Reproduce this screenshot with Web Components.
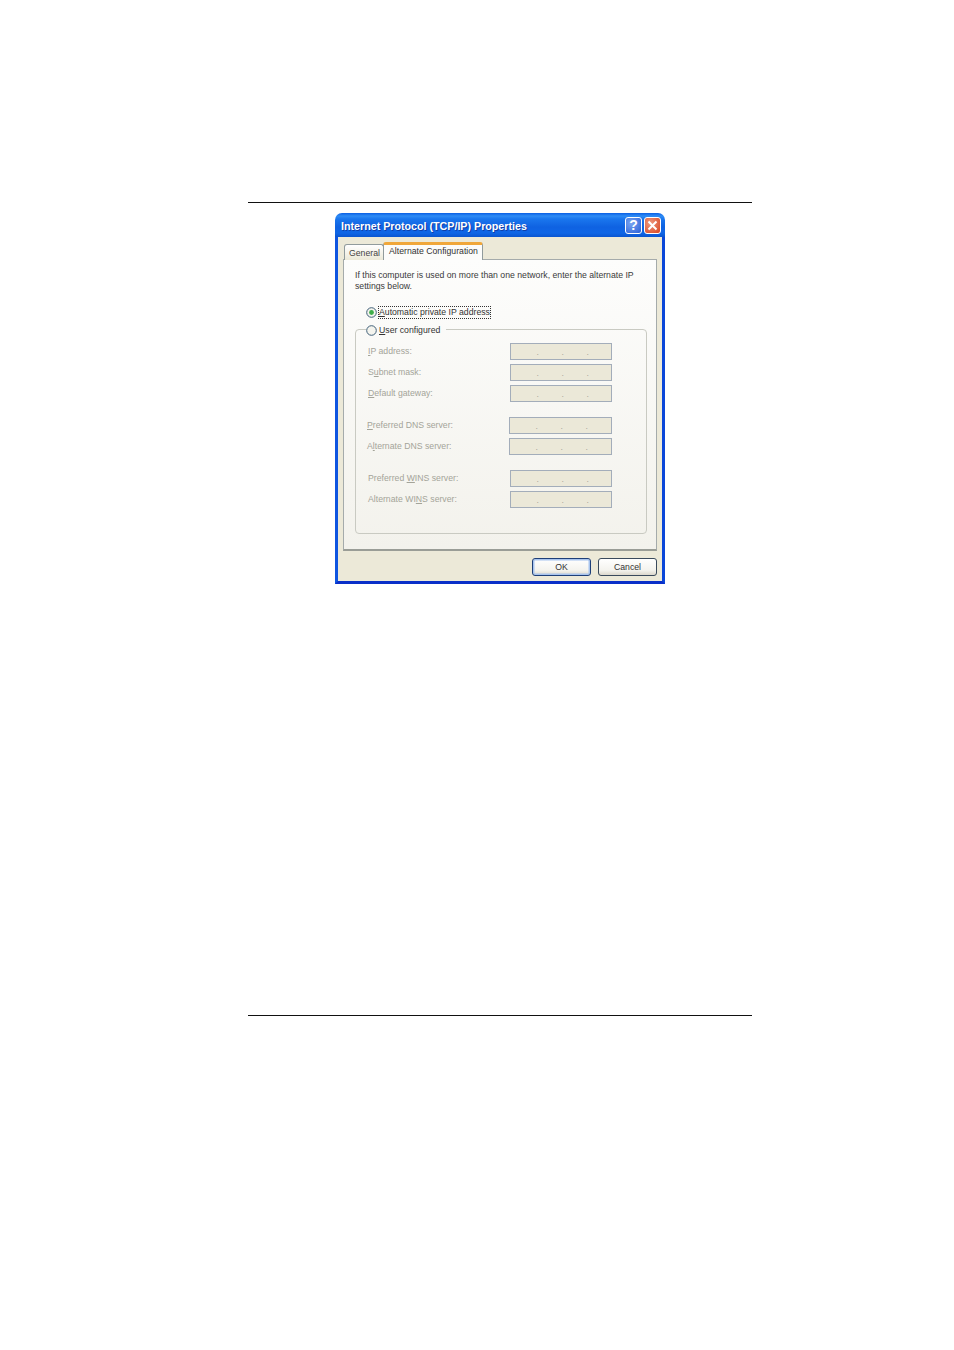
<!DOCTYPE html>
<html>
<head>
<meta charset="utf-8">
<title>Internet Protocol (TCP/IP) Properties</title>
<style>
html,body{margin:0;padding:0;background:#fff;}
body{font-family:"Liberation Sans",Arial,sans-serif;}
</style>
</head>
<body>
<manual-page>
  <xp-window title="Internet Protocol (TCP/IP) Properties">
    <xp-tabs></xp-tabs>
  </xp-window>
</manual-page>

<script>
class ManualPage extends HTMLElement {
    constructor(){
        super();
        this.attachShadow({mode:'open'});
        this.shadowRoot.innerHTML = `
        <style>
            :host{display:block;width:954px;height:1350px;padding-top:202px;box-sizing:border-box;}
            .sheet{width:504px;height:814px;margin-left:248px;box-sizing:border-box;
                   border-top:1px solid #111;border-bottom:1px solid #111;padding-top:10px;}
            .center{margin-left:87px;}
        </style>
        <div class="sheet"><div class="center"><slot></slot></div></div>`;
    }
}

class XpWindow extends HTMLElement {
    constructor(){
        super();
        this.attachShadow({mode:'open'});
        this.shadowRoot.innerHTML = `
        <style>
            :host{display:flex;flex-direction:column;width:330px;height:371px;box-sizing:border-box;
                  border-radius:7px 7px 0 0;overflow:hidden;font-family:"Liberation Sans",Arial,sans-serif;}
            .bar{height:24px;flex:none;display:flex;align-items:center;padding:0 4px 0 6px;gap:2px;
                 background:linear-gradient(#0a5fe4 0,#2f8cf5 3px,#1a76ee 6px,#0f62e2 14px,#0f66e6 20px,#0a55d0 24px);}
            .name{flex:1;color:#fff;font-size:10.7px;font-weight:bold;white-space:nowrap;position:relative;top:1px;
                  text-shadow:1px 1px 0 #0f3fa8;}
            .btn{width:17px;height:17px;box-sizing:border-box;border:1px solid #fff;border-radius:3px;
                 display:flex;align-items:center;justify-content:center;}
            .help{background:radial-gradient(circle at 35% 35%,#7aa5f0,#2a5fd8);color:#fff;font-size:14px;font-weight:bold;}
            .close{background:radial-gradient(circle at 35% 35%,#ee9a80,#d8431f);}
            .frame{flex:1;display:flex;flex-direction:column;box-sizing:border-box;background:#ece9d8;
                   border-left:3px solid #0f55e0;border-right:3px solid #0a46d8;border-bottom:3px solid #0a2fc8;
                   padding:5px 5px 0;}
            .foot{display:flex;justify-content:flex-end;gap:7px;margin-top:7px;}
        </style>
        <div class="bar">
            <span class="name"></span>
            <span class="btn help">?</span>
            <span class="btn close">
                <svg width="11" height="11" viewBox="0 0 11 11"><path d="M1.5 1.5L9.5 9.5M9.5 1.5L1.5 9.5" stroke="#fff" stroke-width="2" fill="none"/></svg>
            </span>
        </div>
        <div class="frame">
            <slot></slot>
            <div class="foot">
                <xp-button default>OK</xp-button>
                <xp-button>Cancel</xp-button>
            </div>
        </div>`;
        this.shadowRoot.querySelector('.name').innerText = this.getAttribute('title');
    }
}

class XpTabs extends HTMLElement {
    constructor(){
        super();
        this.attachShadow({mode:'open'});
        this.shadowRoot.innerHTML = `
        <style>
            :host{display:block;font-size:8.7px;color:#3a3a3a;}
            .strip{display:flex;align-items:flex-end;height:18px;padding-left:1px;position:relative;z-index:1;}
            .tab{box-sizing:border-box;background:linear-gradient(#fff,#ece9d8);border:1px solid #919b9c;border-bottom:none;
                 border-radius:3px 3px 0 0;height:16px;width:40px;padding-left:1px;text-align:center;line-height:16px;color:#444;}
            .on{width:100px;height:18px;background:#fcfcfa;border-top:3px solid #f0a73a;line-height:13px;color:#333;margin-left:-1px;}
            .panel{box-sizing:border-box;height:292px;margin-top:-1px;border:1px solid #a5abab;border-bottom:2px solid #9a9d96;
                   background:linear-gradient(#fdfdfc,#f3f2ec);padding:10px 10px 0 11px;}
            .intro{margin:0;line-height:11px;width:284px;}
            .auto{margin:14px 0 0 11px;}
            fieldset{margin:5px 0 0;padding:8px 0 0;height:210px;box-sizing:border-box;border:1px solid #c9cac2;border-radius:4px;width:292px;}
            legend{margin-left:10px;padding:0 6px 0 0;line-height:11px;height:11px;}
            .gap{height:11px;}
        </style>
        <div class="strip">
            <div class="tab">General</div>
            <div class="tab on">Alternate Configuration</div>
        </div>
        <div class="panel">
            <p class="intro">If this computer is used on more than one network, enter the alternate IP settings below.</p>
            <xp-radio class="auto" checked focus><u>A</u>utomatic private IP address</xp-radio>
            <fieldset>
                <legend><xp-radio><u>U</u>ser configured</xp-radio></legend>
                <xp-field><u>I</u>P address:</xp-field>
                <xp-field>S<u>u</u>bnet mask:</xp-field>
                <xp-field><u>D</u>efault gateway:</xp-field>
                <div class="gap"></div>
                <xp-field shift><u>P</u>referred DNS server:</xp-field>
                <xp-field shift>A<u>l</u>ternate DNS server:</xp-field>
                <div class="gap"></div>
                <xp-field>Preferred <u>W</u>INS server:</xp-field>
                <xp-field>Alternate WI<u>N</u>S server:</xp-field>
            </fieldset>
        </div>`;
    }
}

class XpRadio extends HTMLElement {
    constructor(){
        super();
        this.attachShadow({mode:'open'});
        const dot = this.hasAttribute('checked') ? '<circle cx="5.5" cy="5.5" r="2.4" fill="#3fae4a"/>' : '';
        const outline = this.hasAttribute('focus') ? 'outline:1px dotted #333;' : '';
        this.shadowRoot.innerHTML = `
        <style>
            :host{display:block;color:#333;}
            .row{display:flex;align-items:center;gap:2px;height:13px;}
            svg{flex:none;}
            .txt{line-height:11px;white-space:nowrap;${outline}}
        </style>
        <div class="row">
            <svg width="11" height="11" viewBox="0 0 11 11"><circle cx="5.5" cy="5.5" r="4.8" fill="#f4f4ee" stroke="#3f5f78"/>${dot}</svg>
            <span class="txt"><slot></slot></span>
        </div>`;
    }
}

class XpField extends HTMLElement {
    constructor(){
        super();
        this.attachShadow({mode:'open'});
        this.shadowRoot.innerHTML = `
        <style>
            :host{display:block;height:17px;margin-bottom:4px;color:#a4a499;}
            .row{display:flex;align-items:center;height:17px;padding-left:12px;}
            :host([shift]) .row{padding-left:11px;}
            .lab{width:142px;white-space:nowrap;margin-bottom:2px;}
            .ip{box-sizing:border-box;width:102px;height:17px;border:1px solid #a3adba;background:#ebe8d8;
                display:grid;grid-template-columns:repeat(3,25px);justify-content:start;padding-left:3px;
                text-align:right;line-height:17px;color:#a8a89c;}
            :host([shift]) .ip{width:103px;}
        </style>
        <div class="row">
            <span class="lab"><slot></slot></span>
            <div class="ip"><span>.</span><span>.</span><span>.</span></div>
        </div>`;
    }
}

class XpButton extends HTMLElement {
    constructor(){
        super();
        this.attachShadow({mode:'open'});
        this.shadowRoot.innerHTML = `
        <style>
            :host{display:block;width:59px;height:18px;box-sizing:border-box;border:1px solid #3a4a5c;border-radius:3px;
                  background:linear-gradient(#fff,#f4f3ee 70%,#dcd8cc);text-align:center;line-height:16px;font-size:8.7px;color:#333;}
            :host([default]){border-color:#1e3f78;box-shadow:inset 0 0 0 1.5px #a8c4ee;}
        </style>
        <slot></slot>`;
    }
}

customElements.define('manual-page',ManualPage);
customElements.define('xp-window',XpWindow);
customElements.define('xp-tabs',XpTabs);
customElements.define('xp-radio',XpRadio);
customElements.define('xp-field',XpField);
customElements.define('xp-button',XpButton);
</script>
</body>
</html>
